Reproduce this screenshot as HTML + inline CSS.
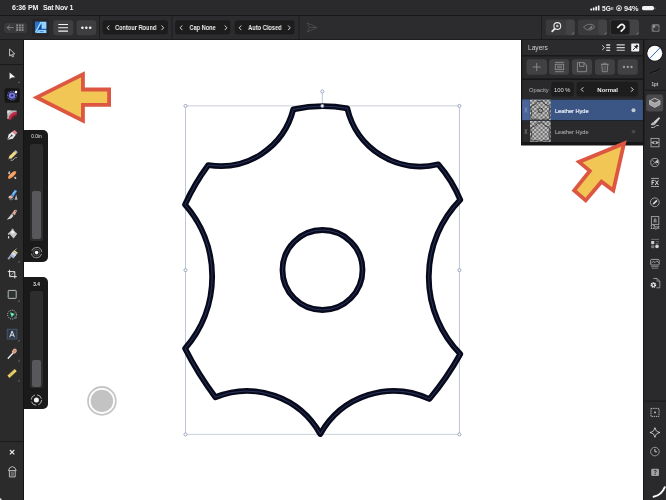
<!DOCTYPE html>
<html>
<head>
<meta charset="utf-8">
<title>Affinity Designer</title>
<style>
html,body{margin:0;padding:0;}
body{width:666px;height:500px;overflow:hidden;background:#fff;position:relative;font-family:"Liberation Sans",sans-serif;color:#fff;}
.abs{position:absolute;}
div.abs,.slbl{will-change:transform;}
#status{left:0;top:0;width:666px;height:15px;background:#2a2a2c;}
#toolbar{left:0;top:15px;width:666px;height:25px;background:#2c2c2e;border-top:1px solid #171718;border-bottom:1px solid #1c1c1d;box-sizing:border-box;}
#lefttools{left:0;top:40px;width:24px;height:460px;background:#2b2b2c;border-right:1.2px solid #141415;box-sizing:border-box;}
#rightbar{left:643px;top:40px;width:23px;height:460px;background:#2a2a2c;border-left:1.3px solid #161617;box-sizing:border-box;}
.btn{position:absolute;background:#3c3c3e;border-radius:3px;}
.sel{position:absolute;background:#1c1c1d;border-radius:3px;height:13px;top:21px;font-size:6px;line-height:13px;text-align:center;color:#e8e8e8;font-weight:bold;}
.vdiv{position:absolute;width:1px;background:#1a1a1b;top:16px;height:24px;}
.slider{position:absolute;left:24px;width:24.2px;background:#1a1a1b;border-radius:0 5px 5px 0;}
.track{position:absolute;left:6.2px;width:12.4px;background:#2d2d2e;border-radius:2.5px;}
.thumb{position:absolute;left:7.8px;width:9.4px;background:#58585a;border-radius:2px;}
.slbl{position:absolute;left:0;width:25px;text-align:center;font-size:4.8px;line-height:5px;color:#e2e2e2;}
#layers{display:none;}
.seltxt{top:23.3px;height:9px;line-height:9px;font-size:6.9px;font-weight:bold;text-align:center;color:#ededed;white-space:nowrap;transform:scaleX(0.82);transform-origin:50% 50%;}
</style>
</head>
<body>
<!-- canvas artwork -->
<svg class="abs" style="left:0;top:0" width="666" height="500" viewBox="0 0 666 500">
  <!-- selection box -->
  <g fill="none" stroke-width="0.85">
    <path d="M185.5,105.9 H459.4 M185.5,434.4 H459.4" stroke="#c2c8d3"/>
    <path d="M185.5,105.9 V434.4 M459.4,105.9 V434.4 M322.3,93 V105.9" stroke="#b3bbd3"/>
  </g>
  <!-- shape -->
  <g fill="none" stroke="#080a1b" stroke-width="5.8" stroke-linejoin="round">
    <path d="M293.3,109.3 Q321,103.6 347.3,108.4 A75,75 0 0 0 438.3,164.3 Q452,180 460.3,199.8 A110,110 0 0 0 460.3,354 Q447,378 429.4,399 A84,84 0 0 0 320.3,434 A84,84 0 0 0 215.4,397.2 Q198,374 185.1,348.5 A109,109 0 0 0 185,204.6 Q195,183 208.3,165.1 A75,75 0 0 0 293.3,109.3 Z"/>
    <circle cx="322.5" cy="270" r="40"/>
  </g>
  <g fill="none" stroke="#3f5390" stroke-width="0.6" stroke-linejoin="round">
    <path d="M293.3,109.3 Q321,103.6 347.3,108.4 A75,75 0 0 0 438.3,164.3 Q452,180 460.3,199.8 A110,110 0 0 0 460.3,354 Q447,378 429.4,399 A84,84 0 0 0 320.3,434 A84,84 0 0 0 215.4,397.2 Q198,374 185.1,348.5 A109,109 0 0 0 185,204.6 Q195,183 208.3,165.1 A75,75 0 0 0 293.3,109.3 Z"/>
    <circle cx="322.5" cy="270" r="40"/>
  </g>
  <!-- handles -->
  <g fill="#fff" stroke="#8b96b4" stroke-width="0.8">
    <circle cx="185.5" cy="105.9" r="1.55"/><circle cx="459.4" cy="105.9" r="1.55"/>
    <circle cx="185.5" cy="270.2" r="1.55"/><circle cx="459.4" cy="270.2" r="1.55"/>
    <circle cx="185.5" cy="434.4" r="1.55"/><circle cx="459.4" cy="434.4" r="1.55"/>
    <circle cx="322.3" cy="91.5" r="1.55"/><circle cx="322.3" cy="105.9" r="1.55"/>
  </g>
  <!-- floating grey circle -->
  <circle cx="101.9" cy="400.9" r="13.9" fill="#fff" stroke="#c6c6c6" stroke-width="1.8"/>
  <circle cx="101.9" cy="400.9" r="11.2" fill="#c3c3c3"/>
  <!-- arrows -->
  <g fill="#f2c655" stroke="#dc5641" stroke-width="3.8" stroke-linejoin="miter" stroke-miterlimit="10">
    <path d="M36.7,97.4 L82.95,74.4 L82.95,89.5 L109.1,89.5 L109.1,104.8 L82.95,104.8 L82.95,120.6 Z"/>
  </g>
</svg>

<div id="status" class="abs">
  <div class="abs" style="left:12px;top:3.6px;font-size:7px;font-weight:bold;color:#f2f2f2;white-space:nowrap;">6:36 PM</div>
  <div class="abs" style="left:43.4px;top:3.6px;font-size:7px;font-weight:bold;color:#f2f2f2;letter-spacing:-0.2px;white-space:nowrap;">Sat Nov 1</div>
  <svg class="abs" style="left:588px;top:0" width="78" height="15" viewBox="588 0 78 15">
    <g fill="#f2f2f2">
      <rect x="590.3" y="8.6" width="1.7" height="1.8" rx="0.3"/>
      <rect x="592.8" y="7.6" width="1.7" height="2.8" rx="0.3"/>
      <rect x="595.3" y="6.6" width="1.7" height="3.8" rx="0.3"/>
      <rect x="597.8" y="5.5" width="1.7" height="4.9" rx="0.3"/>
      <rect x="642" y="6.1" width="12" height="4.1" rx="1.6"/>
      <rect x="654.6" y="7.4" width="0.8" height="1.8" rx="0.4" fill="#888"/>
    </g>
    <circle cx="619" cy="8.2" r="2.5" fill="none" stroke="#f2f2f2" stroke-width="0.9"/>
    <rect x="618" y="7.6" width="2" height="1.7" fill="#f2f2f2"/>
  </svg>
  <div class="abs" style="left:601.7px;top:4.5px;font-size:6.6px;font-weight:bold;color:#f2f2f2;white-space:nowrap;">5G</div>
  <div class="abs" style="left:611px;top:6px;font-size:4px;font-weight:bold;color:#cfcfcf;white-space:nowrap;">E</div>
  <div class="abs" style="left:624px;top:3.6px;font-size:7.3px;font-weight:bold;color:#f2f2f2;white-space:nowrap;">94%</div>
</div>
<div id="toolbar" class="abs"></div>
<!-- toolbar contents (absolute page coords) -->
<div class="btn" style="left:4px;top:22.5px;width:23px;height:10px;background:#39393b;"></div>
<svg class="abs" style="left:0;top:15px" width="666" height="25" viewBox="0 15 666 25">
  <!-- back arrow + grid -->
  <g stroke="#8a8a8c" stroke-width="0.9" fill="none" stroke-linecap="round" stroke-linejoin="round">
    <path d="M7.2,27.6 H13.2 M9.6,25.2 L7.2,27.6 L9.6,30"/>
  </g>
  <g fill="#8a8a8c">
    <rect x="16.2" y="24.3" width="1.9" height="1.9"/><rect x="18.9" y="24.3" width="1.9" height="1.9"/><rect x="21.6" y="24.3" width="1.9" height="1.9"/>
    <rect x="16.2" y="26.7" width="1.9" height="1.9"/><rect x="18.9" y="26.7" width="1.9" height="1.9"/><rect x="21.6" y="26.7" width="1.9" height="1.9"/>
    <rect x="16.2" y="29.1" width="1.9" height="1.9"/><rect x="18.9" y="29.1" width="1.9" height="1.9"/><rect x="21.6" y="29.1" width="1.9" height="1.9"/>
  </g>
  <!-- affinity designer icon -->
  <rect x="32" y="18.5" width="17" height="18" rx="2" fill="#262628"/>
  <rect x="35" y="21.8" width="11.3" height="11.3" fill="#3585dc"/>
  <path d="M35,21.8 H40.4 L35,31.6 Z" fill="#2b74cc"/>
  <path d="M41.4,21.8 H46.3 V28.8 H41.4 Z" fill="#93d3ff"/>
  <path d="M38.3,29 L41.4,23.6 V29 Z" fill="#0f438f"/>
  <path d="M36.2,33.1 L38.6,29.9 H46.3 V33.1 Z" fill="#93d3ff"/>
  <path d="M38.2,29.4 H46.3" stroke="#154f9f" stroke-width="0.8"/>
  <path d="M39.6,31.6 H43.6" stroke="#3d84cf" stroke-width="0.9"/>
  <path d="M41.2,21.9 L35.6,32.2" stroke="#a9dcff" stroke-width="1.2"/>
  <!-- hamburger + dots -->
  <rect x="53.3" y="20.3" width="20" height="15" rx="3" fill="#3e3e40"/>
  <g stroke="#f2f2f2" stroke-width="1.1"><path d="M58.3,24.5 H68 M58.3,27.8 H68 M58.3,31.1 H68"/></g>
  <rect x="76.6" y="20.3" width="19.6" height="15" rx="3" fill="#3e3e40"/>
  <g fill="#f2f2f2"><circle cx="82.4" cy="27.8" r="1.3"/><circle cx="86.3" cy="27.8" r="1.3"/><circle cx="90.2" cy="27.8" r="1.3"/></g>
  <!-- dividers -->
  <g fill="#1d1d1e"><rect x="99" y="16" width="1" height="24"/><rect x="171.5" y="16" width="1" height="24"/><rect x="298.5" y="16" width="1" height="24"/><rect x="541" y="16" width="1" height="24"/></g>
  <!-- selectors -->
  <g fill="#1c1c1d"><rect x="102.6" y="20.2" width="65.4" height="14.4" rx="3"/><rect x="175.2" y="20.2" width="55.2" height="14.4" rx="3"/><rect x="234.7" y="20.2" width="59.8" height="14.4" rx="3"/></g>
  <g stroke="#e6e6e6" stroke-width="0.9" fill="none" stroke-linecap="round" stroke-linejoin="round">
    <path d="M109,25.8 L107.2,27.8 L109,29.8"/><path d="M161.8,25.8 L163.6,27.8 L161.8,29.8"/>
    <path d="M182,25.8 L180.2,27.8 L182,29.8"/><path d="M225,25.8 L226.8,27.8 L225,29.8"/>
    <path d="M241,25.8 L239.2,27.8 L241,29.8"/><path d="M288.4,25.8 L290.2,27.8 L288.4,29.8"/>
  </g>
  <!-- greyed arrow icon -->
  <path d="M307.3,23 L317,27.5 L307.3,32 L309.3,27.5 Z M309.3,27.5 H317" fill="none" stroke="#4c4c4e" stroke-width="0.9" stroke-linejoin="round"/>
  <!-- right buttons -->
  <rect x="545.7" y="19.6" width="29" height="15.6" rx="3" fill="#3a3a3c"/>
  <rect x="566" y="19.6" width="8.7" height="15.6" rx="3" fill="#434345"/>
  <rect x="578" y="19.6" width="29" height="15.6" rx="3" fill="#3a3a3c"/>
  <rect x="598.3" y="19.6" width="8.7" height="15.6" rx="3" fill="#434345"/>
  <rect x="610" y="19.6" width="29" height="15.6" rx="3" fill="#434345"/>
  <rect x="610.6" y="20.2" width="19" height="14.4" rx="2.5" fill="#1c1c1d"/>
  <g fill="#6a6a6c"><path d="M574.2,31.8 V34.6 H571.4 Z"/><path d="M606.5,31.8 V34.6 H603.7 Z"/><path d="M638.5,31.8 V34.6 H635.7 Z"/></g>
  <!-- zoom icon -->
  <circle cx="557.3" cy="26" r="3.4" fill="none" stroke="#e8e8e8" stroke-width="1.1"/>
  <circle cx="557.3" cy="26" r="1.3" fill="#bdbdbd"/>
  <path d="M554.8,28.6 L552.2,31.4" stroke="#e8e8e8" stroke-width="1.8" stroke-linecap="round"/>
  <!-- eye / view icon (greyed) -->
  <path d="M583.5,27.2 Q588,22.6 593.6,25.2 L594.4,27.6 Q590.5,31.4 586.6,29.6 Z" fill="none" stroke="#7b7b7d" stroke-width="0.9" stroke-linejoin="round"/>
  <path d="M588.2,29 L591.6,25.6 L592.8,28.6 Z" fill="#7b7b7d"/>
  <!-- magnet -->
  <path d="M617.2,28.2 L620.4,25 A2.5,2.5 0 0 1 623.9,28.5 L620.7,31.7" fill="none" stroke="#f4f4f4" stroke-width="1.7"/>
  <path d="M616.4,27.4 L618,29" stroke="#1c1c1d" stroke-width="0.6"/>
  <!-- small right icon -->
  <rect x="651.6" y="24" width="8" height="8" rx="1.6" fill="#6d6d6f"/>
  <circle cx="656" cy="28.4" r="2.6" fill="#3a3a3c"/>
  <path d="M653,25.4 h2.2 v2.2 h-2.2z" fill="#9a9a9c"/>
</svg>
<div class="abs seltxt" style="left:102.6px;width:65.4px;">Contour Round</div>
<div class="abs seltxt" style="left:175.2px;width:55.2px;">Cap None</div>
<div class="abs seltxt" style="left:234.7px;width:59.8px;">Auto Closed</div>

<div id="lefttools" class="abs"></div>
<svg class="abs" style="left:0;top:40px" width="24" height="460" viewBox="0 40 24 460">
  <rect x="0" y="64" width="23" height="1" fill="#1a1a1b"/>
  <rect x="0" y="441" width="23" height="1" fill="#1a1a1b"/>
  <!-- outline cursor -->
  <path d="M9.6,49 L9.6,56 L11.3,54.6 L12.4,57 L13.6,56.4 L12.5,54.1 L14.8,53.9 Z" fill="#1f1f20" stroke="#c2c2c4" stroke-width="1" stroke-linejoin="round"/>
  <!-- move arrow -->
  <path d="M9.6,72.6 L9.6,79.2 L11.6,77.5 L15.3,77.3 Z" fill="#f5f5f5"/>
  <path d="M19.6,81 V83 H17.6 Z" fill="#6c6c6e"/>
  <!-- selected contour tool -->
  <rect x="4.5" y="88.2" width="15.2" height="14.6" rx="2" fill="#161617"/>
  <circle cx="12" cy="95.6" r="4.3" fill="none" stroke="#6f70dc" stroke-width="1.2" stroke-dasharray="0.9 0.7"/>
  <circle cx="12" cy="95.6" r="3.2" fill="#7a7be4"/>
  <circle cx="12" cy="95.6" r="1.7" fill="#5a5bc8"/>
  <circle cx="12.2" cy="95.4" r="0.8" fill="#161630"/>
  <circle cx="16" cy="92" r="1.25" fill="#fff"/>
  <!-- corner tool -->
  <path d="M7.3,110.5 H16.6 V112 L9,119 H7.3 Z" fill="#b9b9bb"/>
  <path d="M7.3,110.5 H11 L7.3,114 Z" fill="#e2e2e4"/>
  <path d="M8.2,119.4 Q9,112.6 16.8,111.6 L16.8,114.6 Q11.6,115.2 11,119.4 Z" fill="#c22d47"/>
  <path d="M11,119.4 Q11.6,115.2 16.8,114.6 L16.8,116 Q12.6,116.6 12.2,119.4 Z" fill="#7d1f2f"/>
  <!-- pen tool -->
  <path d="M7.4,139.8 L8.6,134.6 L12.6,131.6 L15.8,134.8 L12.8,138.8 Z" fill="#e6e6e8"/>
  <path d="M7.4,139.8 L11.4,135.8" stroke="#3a3a3c" stroke-width="0.8"/>
  <circle cx="11.7" cy="135.5" r="0.9" fill="#3a3a3c"/>
  <path d="M12.6,131.6 L14.6,130 L17.4,132.8 L15.8,134.8 Z" fill="#e8808e"/>
  <!-- pencil -->
  <path d="M8.2,159.2 L9.4,156 L14.6,151 L16.8,153.2 L11.6,158.4 Z" fill="#ecd987"/>
  <path d="M14.6,151 L15.7,150 L17.8,152.2 L16.8,153.2 Z" fill="#b9b9bb"/>
  <path d="M8.2,159.2 L8.8,157.4 L10,158.6 Z" fill="#4a4a4c"/>
  <path d="M10.6,160.2 Q13,161 14.4,158.6 Q15.6,157 16.8,157.6" stroke="#bdbdbf" stroke-width="0.9" fill="none"/>
  <!-- vector brush -->
  <g stroke="#d9d9db" stroke-width="0.8"><path d="M8.2,172 L10.4,174.2 M9.6,171.2 V173 M14.2,177.2 L16,179 M15.4,176.8 V178.8 M14.6,178 H16.4 M8,173.6 H10"/></g>
  <ellipse cx="12.1" cy="175" rx="5.2" ry="1.9" transform="rotate(-42 12.1 175)" fill="#f0924d"/>
  <ellipse cx="12.1" cy="174.6" rx="3.6" ry="0.9" transform="rotate(-42 12.1 174.6)" fill="#f6b07a"/>
  <!-- paint brush blue -->
  <path d="M10.8,195.4 L14.8,190 Q16.4,189.6 17,191.2 L13.2,197 Z" fill="#4e9be8"/>
  <path d="M12.2,193.6 L15,190.4 L16,191 L13.4,194.6 Z" fill="#86c1f6"/>
  <path d="M8.2,197.4 Q9.2,195.2 10.8,195.4 L13.2,197 Q12.2,199 9.6,198.6 Z" fill="#e6b4b4"/>
  <path d="M14.6,199.8 L16.2,194.6 L17.6,199.8 Z" fill="#b4b4b6"/>
  <path d="M9.4,199.6 Q11.6,200.4 13.6,198.6" stroke="#9aa29a" stroke-width="0.7" fill="none"/>
  <!-- knife -->
  <path d="M12,213.4 L14.4,210 Q16.2,209.2 17,210.8 L14.8,215.2 Z" fill="#dba896"/>
  <circle cx="15.6" cy="211.2" r="0.6" fill="#7d5548"/>
  <path d="M6.8,219.8 L12,213.4 L13.4,216 L11,218.6 Z" fill="#d4d4d6"/>
  <!-- fill bucket -->
  <path d="M8.6,233 L12.4,229.6 L17.2,233.8 L13.6,238.6 Z" fill="#c9c9cb"/>
  <path d="M10.6,232 L12.6,230.2 L14.8,232 L12.6,233.8 Z" fill="#f4f4f6"/>
  <path d="M11.4,229.8 Q12.8,227.8 13.8,230.4" stroke="#e4e4e6" stroke-width="0.8" fill="none"/>
  <path d="M8.2,236 Q7.4,238.6 8.6,238.8 Q9.8,238.6 9.2,236 Z" fill="#d9d9db"/>
  <circle cx="8.6" cy="234" r="0.8" fill="#efefef"/>
  <!-- transparency tool -->
  <path d="M9.6,255.8 L13,251.2 L16.8,254 L13.6,258.6 Z" fill="#aeb9d6"/>
  <path d="M13,251.2 L14.2,250 L17.8,252.8 L16.8,254 Z" fill="#ecdf9c"/>
  <path d="M11.4,253.4 L12.6,251.8 L16.2,254.6 L15,256.2 Z" fill="#dcdfe9"/>
  <path d="M7.4,258.8 L9.6,255.8 L11.2,257 L9,259.8 Z" fill="#9aa3b6"/>
  <path d="M15.2,250 L16.6,248.6" stroke="#bdbdbf" stroke-width="0.9"/>
  <path d="M19.6,260.4 V262.4 H17.6 Z" fill="#6c6c6e"/>
  <!-- crop -->
  <g stroke="#e4e4e6" stroke-width="1" fill="none"><path d="M9.6,269.8 V276.6 H16.8 M7.8,271.6 H14.8 V278.4"/><path d="M9.8,276.4 L14.6,271.8" stroke-width="0.6"/></g>
  <!-- rectangle -->
  <rect x="8.2" y="290.4" width="8" height="8" rx="0.6" fill="#2d3332" stroke="#c6c6c8" stroke-width="0.9"/>
  <path d="M19.6,299.8 V301.8 H17.6 Z" fill="#6c6c6e"/>
  <!-- green symbol tool -->
  <circle cx="12" cy="314.6" r="4.4" fill="none" stroke="#dfe6e4" stroke-width="0.9" stroke-dasharray="0.9 1.1"/>
  <path d="M10,312.2 L15,313.8 L11.6,317.6 Z" fill="#3fcf8a"/>
  <path d="M11.2,313.4 L13.2,314 L11.8,315.6 Z" fill="#d6ffe9"/>
  <circle cx="15.6" cy="317.6" r="1.4" fill="#52687a"/>
  <!-- text frame -->
  <rect x="7.2" y="329.2" width="9.8" height="9.8" fill="#2c3a49" stroke="#51647a" stroke-width="0.7"/>
  <path d="M9.8,337.2 L12.1,331 L14.4,337.2 M10.7,335.2 H13.5" stroke="#f2f2f4" stroke-width="0.9" fill="none"/>
  <path d="M19.6,339.6 V341.6 H17.6 Z" fill="#6c6c6e"/>
  <!-- colour picker -->
  <path d="M8.2,358.2 L13,353" stroke="#f0f0f2" stroke-width="1.3" stroke-linecap="round"/>
  <ellipse cx="14.4" cy="351.2" rx="2.7" ry="2.2" transform="rotate(-45 14.4 351.2)" fill="#d9a88e"/>
  <circle cx="14.8" cy="350.8" r="0.9" fill="#b9826a"/>
  <path d="M19.6,359.6 V361.6 H17.6 Z" fill="#6c6c6e"/>
  <!-- ruler -->
  <path d="M7.2,375.6 L14.8,368.8 L17,371.2 L9.4,378.2 Z" fill="#ecd672" stroke="#2a2410" stroke-width="0.5"/>
  <path d="M9.6,375.6 L13.6,372" stroke="#a89636" stroke-width="0.5"/>
  <path d="M19.6,379.6 V381.6 H17.6 Z" fill="#6c6c6e"/>
  <!-- close X -->
  <path d="M9.9,450 L14.3,454.4 M14.3,450 L9.9,454.4" stroke="#ececee" stroke-width="1.1"/>
  <!-- trash -->
  <g fill="none" stroke="#c2c2c4" stroke-width="0.95"><path d="M9.4,470.6 V476.9 H15.2 V470.6"/><path d="M8.4,470.6 Q9,467 12.3,466.6 Q15.6,467 16.2,470.6 Z"/></g>
  <rect x="10.7" y="471.4" width="3.2" height="4.8" fill="#666668"/>
  <rect x="0" y="498.4" width="1.4" height="1.6" fill="#e8e8e8"/>
</svg>

<div id="rightbar" class="abs"></div>
<div id="layers" class="abs"></div>
<svg class="abs" style="left:520px;top:39px" width="146" height="461" viewBox="520 39 146 461">
  <defs>
    <pattern id="chk" x="530" y="99.6" width="4.2" height="4.2" patternUnits="userSpaceOnUse">
      <rect x="0" y="0" width="4.2" height="4.2" fill="#6b6b6b"/>
      <rect x="0" y="0" width="2.1" height="2.1" fill="#c6c6c6"/>
      <rect x="2.1" y="2.1" width="2.1" height="2.1" fill="#c6c6c6"/>
    </pattern>
  </defs>
  <!-- panel background & borders -->
  <rect x="521" y="39.7" width="123.4" height="105.8" fill="#161617"/>
  <rect x="522.3" y="40" width="120.6" height="15.2" fill="#2b2b2d"/>
  <rect x="522.3" y="56.4" width="120.6" height="22" fill="#2a2a2c"/>
  <rect x="522.3" y="80" width="120.6" height="19.4" fill="#2a2a2c"/>
  <!-- header icons -->
  <g stroke="#d2d2d4" stroke-width="1" fill="none">
    <path d="M602.2,45.4 L604.6,47.7 L602.2,50"/>
    <path d="M606.2,45 H610.2 M606.2,47.7 H610.2 M606.2,50.4 H610.2" stroke-width="1.3"/>
    <path d="M616.6,44.9 H624.8 M616.6,47.6 H624.8 M616.6,50.3 H624.8" stroke-width="1.1"/>
  </g>
  <rect x="631.2" y="43.6" width="8" height="8" rx="0.8" fill="#f2f2f2"/>
  <path d="M633,50 L635.4,47.6 M634.2,45.8 L637.2,48.8 M635.2,46.6 L636.8,45 L638,46.2 L636.4,47.8 Z" stroke="#1a1a1a" stroke-width="0.9" fill="#1a1a1a"/>
  <!-- buttons -->
  <g fill="#414143">
    <rect x="526.5" y="59.3" width="20.5" height="15.4" rx="3"/>
    <rect x="549.1" y="59.3" width="20" height="15.4" rx="3"/>
    <rect x="571.9" y="59.3" width="20.2" height="15.4" rx="3"/>
    <rect x="594.9" y="59.3" width="20" height="15.4" rx="3"/>
    <rect x="617.6" y="59.3" width="20.2" height="15.4" rx="3"/>
  </g>
  <g stroke="#8c8c8e" stroke-width="0.9" fill="none">
    <path d="M532.6,67 H540.8 M536.7,62.9 V71.1"/>
    <path d="M555,62.4 H563.9 M555,71.7 H563.9"/>
    <rect x="555.3" y="64.3" width="8.3" height="5.3"/>
    <path d="M577.4,62.6 H584 L586.6,65 V71.7 H577.4 Z"/>
    <path d="M579.6,62.8 V66.4 H584 V62.8"/>
    <path d="M601.8,64.4 H607.8 L607.3,71.7 H602.3 Z M600.8,64.2 H608.8 M603.3,64 Q604.8,61.6 606.3,64"/>
  </g>
  <rect x="557" y="65.6" width="5" height="2.8" fill="#6e6e70"/>
  <rect x="603.4" y="65.8" width="2.8" height="5" fill="#5a5a5c"/>
  <g fill="#9c9c9e"><circle cx="624" cy="67" r="1.15"/><circle cx="627.8" cy="67" r="1.15"/><circle cx="631.5" cy="67" r="1.15"/></g>
  <!-- opacity row -->
  <rect x="551.2" y="81.8" width="22.6" height="14.8" rx="3" fill="#1d1d1e"/>
  <rect x="576.5" y="81.8" width="61.3" height="14.8" rx="3" fill="#1d1d1e"/>
  <g stroke="#e6e6e6" stroke-width="0.95" fill="none" stroke-linecap="round" stroke-linejoin="round">
    <path d="M583,87.6 L581.2,89.5 L583,91.4"/><path d="M631.4,87.6 L633.2,89.5 L631.4,91.4"/>
  </g>
  <!-- layer rows -->
  <rect x="522.3" y="99.6" width="120.6" height="20.6" fill="#3b5684"/>
  <rect x="522.3" y="99.6" width="7.2" height="20.6" fill="#49659a"/>
  <rect x="522.3" y="121" width="120.6" height="21" fill="#2a2a2c"/>
  <rect x="530" y="99.6" width="20.6" height="20.6" fill="url(#chk)"/>
  <rect x="530" y="121" width="20.6" height="21" fill="url(#chk)"/>
  <g fill="none" stroke="#2a2a2c" stroke-width="0.8">
    <path d="M537.5,101.5 Q540.3,101 543,101.5 Q544,105 548.8,105.6 L550,108 Q547.6,113 550,117.6 L548.4,119.6 Q543,118 540.3,121 Q537.5,118 532.2,119.6 L530.6,117.6 Q533,113 530.6,108 L531.8,105.6 Q536.5,105 537.5,101.5 Z"/>
    <circle cx="540.3" cy="110.4" r="2.3"/>
    <path d="M537.5,123 Q540.3,122.5 543,123 Q544,126.5 548.8,127 L550,129.4 Q547.6,134 550,139 L548.4,141 Q543,139.6 540.3,142 Q537.5,139.6 532.2,141 L530.6,139 Q533,134 530.6,129.4 L531.8,127 Q536.5,126.5 537.5,123 Z"/>
  </g>
  <g stroke="#8ea0c4" stroke-width="0.6" fill="none"><path d="M524.6,107.6 Q527.4,110 524.6,112.6 M527.2,107.6 Q524.4,110 527.2,112.6"/></g>
  <g stroke="#8a8a8c" stroke-width="0.6" fill="none"><path d="M524.6,129 Q527.4,131.4 524.6,134 M527.2,129 Q524.4,131.4 527.2,134"/></g>
  <circle cx="633.5" cy="110.3" r="2" fill="#c3c9d4"/>
  <circle cx="633.5" cy="131.6" r="1.9" fill="#47474a"/>

  <!-- right bar icons -->
  <rect x="644.4" y="89.8" width="22" height="1" fill="#1b1b1c"/>
  <rect x="644.4" y="400.6" width="22" height="1" fill="#1b1b1c"/>
  <circle cx="654.8" cy="53.2" r="8.4" fill="#161617"/>
  <circle cx="654.8" cy="53.2" r="7.5" fill="#fdfdfd"/>
  <path d="M649.6,58.6 L660,47.8" stroke="#2f6fc0" stroke-width="1"/>
  <path d="M650.4,74.2 Q652.6,71.2 655.2,71.4 Q657.6,71.4 659.8,68.4" stroke="#121213" stroke-width="1.2" fill="none"/>
  <path d="M650.6,75.2 Q652.8,72.2 655.4,72.4 Q657.8,72.4 660,69.4" stroke="#4a4a4c" stroke-width="0.5" fill="none"/>
  <!-- layers icon (selected) -->
  <rect x="646.2" y="94.4" width="17" height="17" rx="2.6" fill="#4a4a4c"/>
  <path d="M654.8,98.2 L660,100.8 L654.8,103.4 L649.6,100.8 Z" fill="#555557" stroke="#c4c4c6" stroke-width="0.9" stroke-linejoin="round"/>
  <path d="M649.6,100.8 V104.6 L654.8,107.4 L660,104.6 V100.8 L654.8,103.4 Z" fill="#a4a4a6" stroke="#bcbcbe" stroke-width="0.9" stroke-linejoin="round"/>
  <!-- brush icon -->
  <path d="M653.2,122.2 L658.4,117.4 Q659.8,117 660,118.6 L655.4,124 Z" fill="#d0d0d2"/>
  <path d="M650.8,125 Q651.4,122.4 653.2,122.2 L655.4,124 Q654.6,126 650.8,125 Z" fill="#bcbcbe"/>
  <path d="M651.2,127.4 Q654,128.2 655.4,126.4 Q656.6,124.8 658.8,125.6" stroke="#c8c8ca" stroke-width="0.9" fill="none"/>
  <!-- eye square -->
  <rect x="651" y="138.4" width="8" height="8.4" fill="none" stroke="#a6a6a8" stroke-width="0.9"/>
  <path d="M651,142.6 Q655,139.4 659,142.6 Q655,145.8 651,142.6 Z" fill="#c4c4c6"/>
  <circle cx="655" cy="142.6" r="1.2" fill="#2a2a2c"/>
  <!-- adjustment circle -->
  <circle cx="654.8" cy="162.5" r="4.1" fill="none" stroke="#9e9ea0" stroke-width="1"/>
  <path d="M651.8,159.6 L657.8,165.4 M657.8,159.6 L651.8,165.4" stroke="#9e9ea0" stroke-width="0.7"/>
  <path d="M654.8,162.5 L657.6,159.8 L658.4,163 Z" fill="#d4d4d6"/>
  <!-- FX -->
  <path d="M651,178.4 H659 M651,186.5 H659" stroke="#c4c4c6" stroke-width="0.8"/>
  <path d="M652,185 V180.4 H654.4 M652,182.6 H654 M655.2,180.4 L658.4,185 M658.4,180.4 L655.2,185" stroke="#dcdcde" stroke-width="0.95" fill="none"/>
  <!-- pen circle -->
  <circle cx="654.8" cy="202.3" r="4.4" fill="none" stroke="#a8a8aa" stroke-width="0.9"/>
  <path d="M652.6,204.6 L653,203 L656.4,199.8 L657.6,201 L654.2,204.2 Z" fill="#d8d8da"/>
  <!-- character -->
  <rect x="651.4" y="216.6" width="7.4" height="7.8" fill="none" stroke="#a6a6a8" stroke-width="0.9"/>
  <path d="M654.2,222.6 V219.2 Q655.2,218.4 656,219.2 V222.6 M654.2,221 H656" stroke="#c8c8ca" stroke-width="0.7" fill="none"/>
  <!-- swatches -->
  <path d="M651.2,239.4 H659" stroke="#8a8a8c" stroke-width="0.7"/>
  <rect x="651.2" y="241" width="3" height="3.2" fill="#d0d0d2"/>
  <path d="M655.6,241.6 H659 M655.6,243.4 H659" stroke="#77777a" stroke-width="0.7"/>
  <rect x="651.2" y="245.4" width="3" height="2.8" fill="#808082"/>
  <circle cx="657" cy="246.4" r="1.8" fill="#d6d6d8"/>
  <!-- stock -->
  <rect x="650.6" y="259.4" width="8.6" height="5.6" rx="1" fill="none" stroke="#a8a8aa" stroke-width="0.9"/>
  <path d="M651.4,263 L653.4,261.4 L655,262.6 L656.8,260.8 L658.6,262.6" stroke="#c8c8ca" stroke-width="0.7" fill="none"/>
  <path d="M651,266.6 H658.8 M651.6,268.2 H658.2" stroke="#8e8e90" stroke-width="0.8"/>
  <!-- doc gear -->
  <path d="M653.2,278.4 H657 L659.8,281.2 V287.8 H656.4" fill="none" stroke="#a2a2a4" stroke-width="0.9"/>
  <path d="M657,278.4 V281.2 H659.8" fill="none" stroke="#a2a2a4" stroke-width="0.7"/>
  <circle cx="653.4" cy="285" r="2.1" fill="none" stroke="#f0f0f2" stroke-width="1.5" stroke-dasharray="1.1 0.55"/>
  <circle cx="653.4" cy="285" r="1.5" fill="none" stroke="#f0f0f2" stroke-width="0.9"/>
  <!-- grid -->
  <rect x="651" y="408.4" width="8" height="8" fill="none" stroke="#c4c4c6" stroke-width="0.9" stroke-dasharray="1.4 0.8"/>
  <rect x="654.2" y="411.6" width="1.6" height="1.6" fill="#d6d6d8"/>
  <!-- star diamond -->
  <path d="M654.9,428 Q655.6,431.8 659.4,432.5 Q655.6,433.2 654.9,437 Q654.2,433.2 650.4,432.5 Q654.2,431.8 654.9,428 Z" fill="none" stroke="#bcbcbe" stroke-width="0.9" stroke-linejoin="round"/>
  <g fill="#d0d0d2"><circle cx="654.9" cy="428.2" r="0.8"/><circle cx="654.9" cy="436.8" r="0.8"/><circle cx="650.6" cy="432.5" r="0.8"/><circle cx="659.2" cy="432.5" r="0.8"/></g>
  <!-- clock -->
  <circle cx="654.9" cy="451.6" r="4.3" fill="none" stroke="#a2a2a4" stroke-width="0.9"/>
  <path d="M654.9,449 V451.8 H657" stroke="#dcdcde" stroke-width="0.9" fill="none"/>
  <!-- help -->
  <rect x="651.2" y="468.8" width="7.8" height="7.2" rx="1.2" fill="#a0a0a2"/>
  <path d="M654,470.8 Q655.2,469.8 656.2,470.8 Q656.6,471.8 655.1,472.6 V473.4" stroke="#2a2a2c" stroke-width="0.9" fill="none"/>
  <rect x="654.6" y="474" width="1" height="1" fill="#2a2a2c"/>
  <!-- white arc -->
  <path d="M653.6,496.8 Q661.6,495.2 664.8,487.2" stroke="#f8f8f8" stroke-width="1.9" fill="none" stroke-linecap="round"/>
</svg>
<div class="abs" style="left:527.6px;top:44.4px;font-size:6.6px;line-height:8px;color:#cfcfd1;white-space:nowrap;">Layers</div>
<div class="abs" style="left:528.8px;top:86px;font-size:5.8px;line-height:8px;color:#b4b4b6;white-space:nowrap;" id="opq">Opacity</div>
<div class="abs" style="left:551.2px;width:22.6px;text-align:center;top:85.6px;font-size:5.8px;line-height:8px;color:#dededf;white-space:nowrap;">100 %</div>
<div class="abs" style="left:576.5px;width:61.3px;text-align:center;top:85.8px;font-size:6px;line-height:8px;font-weight:bold;color:#ededed;white-space:nowrap;" id="nrm">Normal</div>
<div class="abs" style="left:555px;top:107.2px;font-size:5.6px;line-height:8px;-webkit-text-stroke:0.18px #e6ebf6;color:#e6ebf6;white-space:nowrap;" id="lh1">Leather Hyde</div>
<div class="abs" style="left:555px;top:128.4px;font-size:5.6px;line-height:8px;-webkit-text-stroke:0.12px #a2a2a4;color:#a2a2a4;white-space:nowrap;" id="lh2">Leather Hyde</div>
<div class="abs" style="left:644.4px;width:21.6px;text-align:center;top:81.6px;font-size:4.5px;line-height:5px;color:#c4c4c6;font-weight:bold;white-space:nowrap;">1pt</div>
<div class="abs" style="left:644.4px;width:21.6px;text-align:center;top:225.4px;font-size:4.5px;line-height:5px;color:#b8b8ba;font-weight:bold;white-space:nowrap;">12pt</div>


<div class="slider" style="top:129.6px;height:132.4px;">
  <div class="slbl" style="top:4.9px;">0.0in</div>
  <div class="track" style="top:14px;height:97px;"></div>
  <div class="thumb" style="top:61px;height:48.6px;"></div>
</div>
<div class="slider" style="top:277.2px;height:132px;">
  <div class="slbl" style="top:4.8px;font-weight:bold;">3.4</div>
  <div class="track" style="top:13.4px;height:97.4px;"></div>
  <div class="thumb" style="top:82.8px;height:26.8px;"></div>
</div>
<svg class="abs" style="left:24px;top:240px" width="26" height="170" viewBox="24 240 26 170">
  <circle cx="36.6" cy="252.6" r="5.2" fill="none" stroke="#b4b4b6" stroke-width="0.8" stroke-dasharray="13.6 2.74" stroke-dashoffset="-1.37"/>
  <circle cx="36.6" cy="252.6" r="3.4" fill="none" stroke="#8a8a8c" stroke-width="0.5"/>
  <circle cx="36.6" cy="252.6" r="1.8" fill="#fff"/>
  <circle cx="36.4" cy="400" r="5.2" fill="none" stroke="#cfcfd1" stroke-width="0.8" stroke-dasharray="6 2.17"/>
  <circle cx="36.4" cy="400" r="2.5" fill="#f4f4f4"/>
</svg>
<svg class="abs" style="left:560px;top:130px" width="90" height="90" viewBox="560 130 90 90">
  <path d="M624,143.4 L613.3,190.5 L601.5,181.7 L585.7,200.4 L574.2,190.4 L589.8,170.9 L579,161.9 Z" fill="#f2c655" stroke="#dc5641" stroke-width="3.8" stroke-linejoin="miter" stroke-miterlimit="10"/>
</svg>
</body>
</html>
